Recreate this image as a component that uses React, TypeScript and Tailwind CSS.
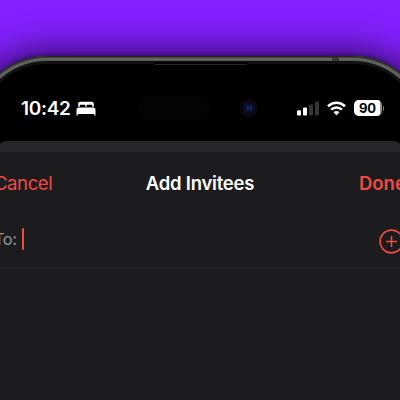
import React from "react";

const BedIcon = () => (
  <svg width="20" height="15" viewBox="0 0 20 15" fill="#fff">
    <path d="M2.2 5.7V3.1C2.2 1.6 3 .8 4.5.8h11c1.5 0 2.3.8 2.3 2.3v2.6h-1.5V5c0-.8-.5-1.3-1.3-1.3h-3.2c-.8 0-1.2.5-1.2 1.3v.7H9.4V5c0-.8-.4-1.3-1.2-1.3H5C4.2 3.7 3.7 4.2 3.7 5v.7z" />
    <path d="M2.7 6.6h14.6c1.4 0 2.2.9 2.2 2.3v5.2c0 .5-.2.7-.6.7s-.7-.2-.7-.7v-1.2H1.8v1.2c0 .5-.2.7-.6.7s-.7-.2-.7-.7V8.9c0-1.4.8-2.3 2.2-2.3z" />
  </svg>
);

const SignalIcon = () => (
  <svg width="22" height="15" viewBox="0 0 22 15">
    <rect x="0" y="9.3" width="4" height="5.2" rx="1.1" fill="#fff" />
    <rect x="6" y="6.5" width="4" height="8" rx="1.1" fill="#fff" />
    <rect x="12" y="3.5" width="4" height="11" rx="1.1" fill="#363636" />
    <rect x="18" y="0.6" width="4" height="13.9" rx="1.1" fill="#363636" />
  </svg>
);

const WifiIcon = () => (
  <svg width="19" height="15" viewBox="0 0 19 15" fill="none" stroke="#fff">
    <path d="M1 5.3C5.8.6 13.2.6 18 5.3" strokeWidth="2.6" />
    <path d="M4.1 8.6c3-2.9 7.8-2.9 10.8 0" strokeWidth="2.4" />
    <path
      d="M9.5 13.9 6.8 11.3c1.6-1.4 3.8-1.4 5.4 0z"
      fill="#fff"
      strokeWidth="0.6"
      strokeLinejoin="round"
    />
  </svg>
);

const BatteryIcon = ({ level }: { level: number }) => (
  <div className="flex items-center gap-px">
    <div className="flex h-4 w-[28px] overflow-hidden rounded-[5px] bg-[#8d8d8d]">
      <div
        className="flex h-full items-center justify-center bg-white pl-0.5 text-[13px] font-bold leading-none text-black"
        style={{ width: `${level + 3}%` }}
      >
        {level}
      </div>
    </div>
    <div className="h-[5px] w-[1.5px] rounded-r-full bg-[#777]" />
  </div>
);

const AddIcon = () => (
  <svg width="25" height="25" viewBox="0 0 25 25" fill="none" stroke="#f04a42">
    <circle cx="12.5" cy="12.5" r="11.4" strokeWidth="1.6" />
    <path d="M12.5 7.1v10.8M7.1 12.5h10.8" strokeWidth="1.6" />
  </svg>
);

const StatusBar = () => (
  <div className="relative flex h-[79px] items-start justify-between pl-[49px] pr-[44px] pt-[38px]">
    {/* dynamic island and camera */}
    <div className="absolute left-[166px] top-[34px] h-6 w-[73px] rounded-full bg-[#040404]" />
    <div className="absolute left-[267px] top-[36px] flex h-5 w-5 items-center justify-center rounded-full bg-[radial-gradient(circle,#0a1030_0%,#0a0918_45%,#0b0509_62%,#000_72%)]">
      <div className="flex h-[10px] w-[10px] items-center justify-center gap-px rounded-full bg-[#0a1136]">
        <div className="h-1 w-[2px] rounded-full bg-[#1b2b58]" />
        <div className="h-1 w-[2px] rounded-full bg-[#1b2b58]" />
      </div>
    </div>
    <div className="flex h-4 items-center gap-[6px]">
      <span className="w-[49px] whitespace-nowrap pt-px text-[19px] font-[560] leading-4 tracking-[-0.3px] text-white">
        10:42
      </span>
      <BedIcon />
    </div>
    <div className="flex h-4 items-center gap-[8px]">
      <SignalIcon />
      <WifiIcon />
      <BatteryIcon level={90} />
    </div>
  </div>
);

const InviteSheet = () => (
  <div className="mx-[22px] flex-1 rounded-t-[14px] bg-[#272728] pt-[11px]">
    <div className="h-full bg-[#1c1c1e]">
      <header className="flex h-[63px] items-center justify-between text-[18.5px] leading-none">
        <button className="w-[80px] whitespace-nowrap text-left tracking-[-0.4px] text-[#f04a42]">
          Cancel
        </button>
        <h1 className="pb-px text-[18.5px] font-[580] tracking-[-0.24px] text-white">
          Add Invitees
        </h1>
        <button className="w-[80px] whitespace-nowrap pl-[33px] text-left font-[580] text-[#f04a42]">
          Done
        </button>
      </header>
      <div className="flex h-[54px] items-start justify-between border-b border-[#29292b] pr-[2px]">
        <div className="flex items-center gap-[5px] pt-[13px]">
          <span className="pt-px text-[16.5px] leading-none tracking-[-0.5px] text-[#929296]">
            To:
          </span>
          <span className="h-[22px] w-[2px] rounded-full bg-[#f04a42]" />
        </div>
        <div className="pt-[14px]">
          <AddIcon />
        </div>
      </div>
    </div>
  </div>
);

export default function App() {
  return (
    <div className="h-[400px] w-[400px] overflow-hidden bg-[#8420ff] pt-[56px] font-[Inter,sans-serif]">
      <div className="relative -mx-[28px] flex h-[520px] flex-col rounded-[75px] bg-black pt-[6px] shadow-[0_0_4px_rgba(0,0,0,0.6),0_2px_34px_8px_rgba(0,0,0,0.62)]">
        <StatusBar />
        <InviteSheet />
        {/* metal frame */}
        <div className="pointer-events-none absolute inset-0 rounded-[75px] shadow-[inset_0_0_0_1px_#242423,inset_0_0_0_2px_#454743,inset_0_0_0_3px_#5c5e5a,inset_0_0_0_4px_#686a66,inset_0_0_0_5px_#555753,inset_0_0_0_6px_#121212,inset_0_0_0_8px_#111211]" />
        <div className="absolute left-[181px] top-[6px] h-[3px] w-[95px] rounded-b-sm border-b border-[#262826] bg-black" />
        <div className="absolute left-[360px] top-px h-[4px] w-[7px] bg-[#353733]" />
      </div>
    </div>
  );
}
